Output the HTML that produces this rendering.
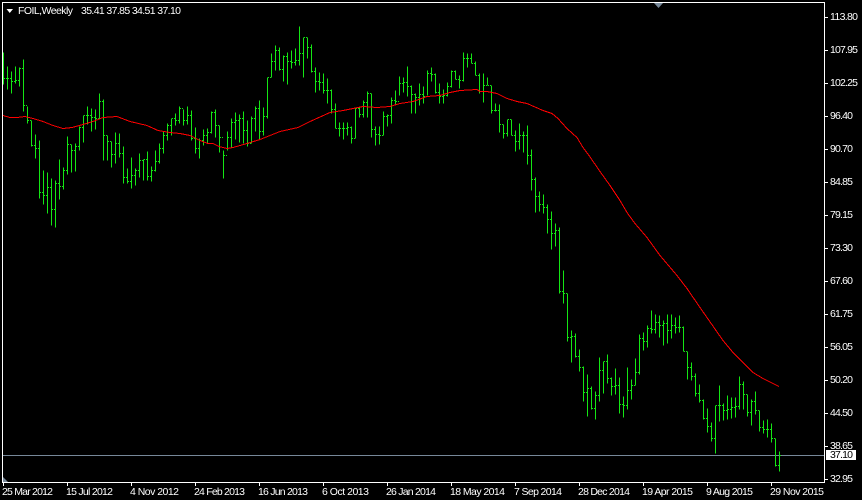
<!DOCTYPE html>
<html>
<head>
<meta charset="utf-8">
<title>FOIL,Weekly</title>
<style>
html,body{margin:0;padding:0;background:#000;width:862px;height:500px;overflow:hidden}
svg{display:block}
text{font-family:"Liberation Sans",sans-serif;font-size:10.5px;fill:#fff}
</style>
</head>
<body>
<svg width="862" height="500" viewBox="0 0 862 500" xmlns="http://www.w3.org/2000/svg">
<rect width="862" height="500" fill="#000"/>
<g transform="translate(0,.5)">
<path fill="none" stroke="#778899" stroke-width="1" shape-rendering="crispEdges" d="M3 455H824"/>
<path fill="none" stroke="#14e614" stroke-width="1" shape-rendering="crispEdges" d="M3.5 52V84M4 78h1
M7.5 66V89M6 78h1M8 78h1
M11.5 71V93M10 78h1M12 81h1
M15.5 66V83M14 81h1M16 80h1
M19.5 67V86M18 80h1M20 68h1
M23.5 59V111M22 68h1M24 105h1
M27.5 106V123M26 105h1M28 120h1
M31.5 120V146M30 120h1M32 145h1
M35.5 134V158M34 145h1M36 148h1
M39.5 140V198M38 148h1M40 192h1
M43.5 170V204M42 192h1M44 195h1
M47.5 172V213M46 195h1M48 187h1
M51.5 178V225M50 187h1M52 209h1
M55.5 180V227M54 209h1M56 183h1
M59.5 159V199M58 183h1M60 186h1
M63.5 167V189M62 186h1M64 170h1
M67.5 136V174M66 170h1M68 144h1
M71.5 144V172M70 144h1M72 150h1
M75.5 143V171M74 150h1M76 146h1
M79.5 126V150M78 146h1M80 127h1
M83.5 115V142M82 127h1M84 115h1
M87.5 106V124M86 115h1M88 115h1
M91.5 108V131M90 115h1M92 117h1
M95.5 109V129M94 117h1M96 118h1
M99.5 93V119M98 118h1M100 101h1
M103.5 99V160M102 101h1M104 135h1
M107.5 135V160M106 135h1M108 141h1
M111.5 141V167M110 141h1M112 154h1
M115.5 132V163M114 154h1M116 143h1
M119.5 133V157M118 143h1M120 153h1
M123.5 146V183M122 153h1M124 177h1
M127.5 168V183M126 177h1M128 181h1
M131.5 157V188M130 181h1M132 175h1
M135.5 168V185M134 175h1M136 170h1
M139.5 153V177M138 170h1M140 160h1
M143.5 159V180M142 160h1M144 159h1
M147.5 151V180M146 159h1M148 176h1
M151.5 166V181M150 176h1M152 170h1
M155.5 150V171M154 170h1M156 161h1
M159.5 143V163M158 161h1M160 148h1
M163.5 131V153M162 148h1M164 135h1
M167.5 123V140M166 135h1M168 125h1
M171.5 118V135M170 125h1M172 118h1
M175.5 113V125M174 118h1M176 120h1
M179.5 106V123M178 120h1M180 108h1
M183.5 109V125M182 108h1M184 120h1
M187.5 106V124M186 120h1M188 115h1
M191.5 110V140M190 115h1M192 138h1
M195.5 127V153M194 138h1M196 148h1
M199.5 138V158M198 148h1M200 140h1
M203.5 129V145M202 140h1M204 135h1
M207.5 128V143M206 135h1M208 132h1
M211.5 111V133M210 132h1M212 112h1
M215.5 109V137M214 112h1M216 125h1
M219.5 125V152M218 125h1M220 137h1
M223.5 150V178M222 137h1M224 155h1
M227.5 131V150M226 155h1M228 137h1
M231.5 118V147M230 137h1M232 122h1
M235.5 112V139M234 122h1M236 120h1
M239.5 114V142M238 120h1M240 118h1
M243.5 111V143M242 118h1M244 130h1
M247.5 120V146M246 130h1M248 143h1
M251.5 116V143M250 143h1M252 118h1
M255.5 106V131M254 118h1M256 108h1
M259.5 100V139M258 108h1M260 131h1
M263.5 107V135M262 131h1M264 116h1
M267.5 77V118M266 116h1M268 77h1
M271.5 53V77M270 77h1M272 61h1
M275.5 45V70M274 61h1M276 50h1
M279.5 47V70M278 50h1M280 69h1
M283.5 55V81M282 69h1M284 56h1
M287.5 52V84M286 56h1M288 61h1
M291.5 50V68M290 61h1M292 62h1
M295.5 48V65M294 62h1M296 60h1
M299.5 26V65M298 60h1M300 53h1
M303.5 37V77M302 53h1M304 37h1
M307.5 37V58M306 37h1M308 47h1
M311.5 44V72M310 47h1M312 71h1
M315.5 67V92M314 71h1M316 81h1
M319.5 72V90M318 81h1M320 82h1
M323.5 73V93M322 82h1M324 90h1
M327.5 78V103M326 90h1M328 90h1
M331.5 89V113M330 90h1M332 109h1
M335.5 103V128M334 109h1M336 128h1
M339.5 122V136M338 128h1M340 128h1
M343.5 122V139M342 128h1M344 128h1
M347.5 122V135M346 128h1M348 127h1
M351.5 126V143M350 127h1M352 138h1
M355.5 108V138M354 138h1M356 108h1
M359.5 106V117M358 108h1M360 114h1
M363.5 100V117M362 114h1M364 102h1
M367.5 91V117M366 102h1M368 93h1
M371.5 93V137M370 93h1M372 129h1
M375.5 126V145M374 129h1M376 134h1
M379.5 126V144M378 134h1M380 135h1
M383.5 111V135M382 135h1M384 116h1
M387.5 114V126M386 116h1M388 115h1
M391.5 97V123M390 115h1M392 100h1
M395.5 90V105M394 100h1M396 101h1
M399.5 76V95M398 101h1M400 83h1
M403.5 77V92M402 83h1M404 82h1
M407.5 66V96M406 82h1M408 86h1
M411.5 85V113M410 86h1M412 94h1
M415.5 93V113M414 94h1M416 97h1
M419.5 83V105M418 97h1M420 94h1
M423.5 86V103M422 94h1M424 96h1
M427.5 70V95M426 96h1M428 73h1
M431.5 67V81M430 73h1M432 74h1
M435.5 73V93M434 74h1M436 92h1
M439.5 83V103M438 92h1M440 96h1
M443.5 89V103M442 96h1M444 95h1
M447.5 82V96M446 95h1M448 86h1
M451.5 70V87M450 86h1M452 71h1
M455.5 70V79M454 71h1M456 79h1
M459.5 75V88M458 79h1M460 80h1
M463.5 52V81M462 80h1M464 58h1
M467.5 53V67M466 58h1M468 58h1
M471.5 53V63M470 58h1M472 63h1
M475.5 61V75M474 63h1M476 75h1
M479.5 73V93M478 75h1M480 91h1
M483.5 73V102M482 91h1M484 85h1
M487.5 77V85M486 85h1M488 85h1
M491.5 85V113M490 85h1M492 110h1
M495.5 103V111M494 110h1M496 110h1
M499.5 104V132M498 110h1M500 124h1
M503.5 124V138M502 124h1M504 133h1
M507.5 119V136M506 133h1M508 119h1
M511.5 119V135M510 119h1M512 135h1
M515.5 130V151M514 135h1M516 141h1
M519.5 123V149M518 141h1M520 135h1
M523.5 131V152M522 135h1M524 135h1
M527.5 125V164M526 135h1M528 155h1
M531.5 149V190M530 155h1M532 179h1
M535.5 177V212M534 179h1M536 196h1
M539.5 191V211M538 196h1M540 204h1
M543.5 194V213M542 204h1M544 207h1
M547.5 204V233M546 207h1M548 219h1
M551.5 211V249M550 219h1M552 233h1
M555.5 223V246M554 233h1M556 230h1
M559.5 227V293M558 230h1M560 291h1
M563.5 270V303M562 291h1M564 293h1
M567.5 293V341M566 293h1M568 337h1
M571.5 330V362M570 337h1M572 336h1
M575.5 333V357M574 336h1M576 356h1
M579.5 349V371M578 356h1M580 367h1
M583.5 366V401M582 367h1M584 392h1
M587.5 374V416M586 392h1M588 388h1
M591.5 386V409M590 388h1M592 408h1
M595.5 391V419M594 408h1M596 395h1
M599.5 357V401M598 395h1M600 370h1
M603.5 361V393M602 370h1M604 361h1
M607.5 354V383M606 361h1M608 378h1
M611.5 377V395M610 378h1M612 386h1
M615.5 368V394M614 386h1M616 385h1
M619.5 377V413M618 385h1M620 404h1
M623.5 396V417M622 404h1M624 405h1
M627.5 367V409M626 405h1M628 390h1
M631.5 379V399M630 390h1M632 385h1
M635.5 358V385M634 385h1M636 372h1
M639.5 334V374M638 372h1M640 338h1
M643.5 332V350M642 338h1M644 341h1
M647.5 325V347M646 341h1M648 328h1
M651.5 310V333M650 328h1M652 329h1
M655.5 314V333M654 329h1M656 322h1
M659.5 315V337M658 322h1M660 325h1
M663.5 320V345M662 325h1M664 323h1
M667.5 314V343M666 323h1M668 330h1
M671.5 314V338M670 330h1M672 325h1
M675.5 317V333M674 325h1M676 327h1
M679.5 315V332M678 327h1M680 327h1
M683.5 326V351M682 327h1M684 351h1
M687.5 351V379M686 351h1M688 367h1
M691.5 362V380M690 367h1M692 376h1
M695.5 373V396M694 376h1M696 393h1
M699.5 384V402M698 393h1M700 400h1
M703.5 399V419M702 400h1M704 418h1
M707.5 408V432M706 418h1M708 426h1
M711.5 422V441M710 426h1M712 438h1
M715.5 405V453M714 438h1M716 405h1
M719.5 385V421M718 405h1M720 405h1
M723.5 403V420M722 405h1M724 410h1
M727.5 395V419M726 410h1M728 409h1
M731.5 397V418M730 409h1M732 407h1
M735.5 397V417M734 407h1M736 406h1
M739.5 376V409M738 406h1M740 384h1
M743.5 381V409M742 384h1M744 394h1
M747.5 394V416M746 394h1M748 412h1
M751.5 399V425M750 412h1M752 401h1
M755.5 391V414M754 401h1M756 410h1
M759.5 410V431M758 410h1M760 427h1
M763.5 420V433M762 427h1M764 429h1
M767.5 419V437M766 429h1M768 429h1
M771.5 423V442M770 429h1M772 438h1
M775.5 438V466M774 438h1M776 465h1
M779.5 451V471M778 465h1M780 455h1"/>
<polyline fill="none" stroke="#f00" stroke-width="1" shape-rendering="crispEdges" points="3,115 10,117 17,117 25,116 33,118 43,121 53,125 63,128 72,127 83,124 93,121 103,117 117,116 130,121 147,125 158,130 170,132 180,133 190,135 200,140 208,143 213,143 219,146 227,148 233,147 247,143 260,139 270,135 280,131 298,127 310,121 330,112 343,110 353,108 363,106 377,107 390,106 400,103 413,101 427,96 440,95 450,92 460,90 477,89 480,91 487,91 497,93 507,98 517,101 527,103 543,110 552,113 558,118 567,128 577,137 583,147 589,155 600,171 610,185 620,200 627,212 635,223 647,237 660,255 677,275 687,288 700,307 723,340 733,352 743,362 753,372 763,378 779,386"/>
</g>
<path fill="none" stroke="#fff" stroke-width="1" shape-rendering="crispEdges" d="M2.5 2.5H824.5V482.5H2.5Z"/>
<path fill="none" stroke="#fff" stroke-width="1" shape-rendering="crispEdges" d="M825 17.5h3M825 50.5h3M825 83.5h3M825 116.5h3M825 149.5h3M825 182.5h3M825 215.5h3M825 248.5h3M825 281.5h3M825 314.5h3M825 347.5h3M825 380.5h3M825 413.5h3M825 446.5h3M825 479.5h3
M3.5 483v3M67.5 483v3M131.5 483v3M195.5 483v3M259.5 483v3M323.5 483v3M387.5 483v3M451.5 483v3M515.5 483v3M579.5 483v3M643.5 483v3M707.5 483v3M771.5 483v3"/>
<polygon points="3,477 8,482 3,482" fill="#778899"/>
<polygon points="654,3 663,3 658.5,8" fill="#778899"/>
<polygon points="6.5,9 13,9 9.75,13" fill="#fff"/>
<text x="18" y="14" textLength="55">FOIL,Weekly</text>
<text x="81" y="14" textLength="100">35.41 37.85 34.51 37.10</text>
<text x="830" y="20" textLength="28">113.80</text>
<text x="830" y="53" textLength="28">107.95</text>
<text x="830" y="86" textLength="28">102.25</text>
<text x="830" y="119" textLength="23">96.40</text>
<text x="830" y="152" textLength="23">90.70</text>
<text x="830" y="185" textLength="23">84.85</text>
<text x="830" y="218" textLength="23">79.15</text>
<text x="830" y="251" textLength="23">73.30</text>
<text x="830" y="284" textLength="23">67.60</text>
<text x="830" y="317" textLength="23">61.75</text>
<text x="830" y="350" textLength="23">56.05</text>
<text x="830" y="383" textLength="23">50.20</text>
<text x="830" y="416" textLength="23">44.50</text>
<text x="830" y="449" textLength="23">38.65</text>
<text x="830" y="482" textLength="23">32.95</text>
<rect x="826" y="450" width="30" height="10" fill="#fff"/>
<text x="830" y="458" textLength="23" style="fill:#000">37.10</text>
<text x="2" y="495" textLength="51">25 Mar 2012</text>
<text x="66" y="495" textLength="47">15 Jul 2012</text>
<text x="130" y="495" textLength="49">4 Nov 2012</text>
<text x="194" y="495" textLength="51">24 Feb 2013</text>
<text x="258" y="495" textLength="50">16 Jun 2013</text>
<text x="322" y="495" textLength="47">6 Oct 2013</text>
<text x="386" y="495" textLength="50">26 Jan 2014</text>
<text x="450" y="495" textLength="55">18 May 2014</text>
<text x="514" y="495" textLength="48">7 Sep 2014</text>
<text x="578" y="495" textLength="52">28 Dec 2014</text>
<text x="642" y="495" textLength="51">19 Apr 2015</text>
<text x="706" y="495" textLength="47">9 Aug 2015</text>
<text x="770" y="495" textLength="54">29 Nov 2015</text>
</svg>
</body>
</html>
